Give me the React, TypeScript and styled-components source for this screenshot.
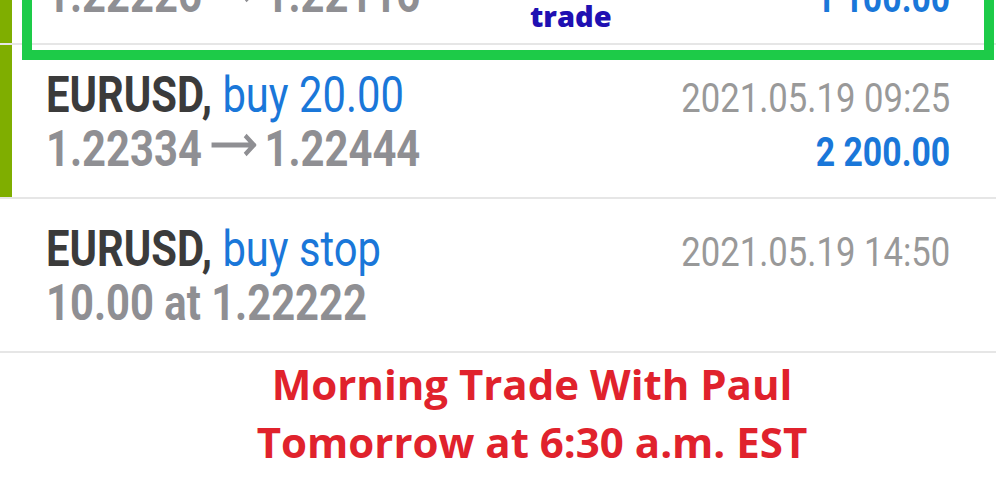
import React from 'react'
import styled, { createGlobalStyle } from 'styled-components'

const GlobalStyle = createGlobalStyle`
  html, body {
    margin: 0;
    padding: 0;
    background: #ffffff;
    overflow: hidden;
  }
`

const Page = styled.div`
  position: relative;
  width: 996px;
  height: 480px;
  overflow: hidden;
  background: #ffffff;
`

const List = styled.div`
  margin-top: -109px;
`

const Row = styled.div<{ $marked?: boolean }>`
  height: 154px;
  box-sizing: border-box;
  padding: 23px 46px 0 46px;
  border-bottom: 2px solid #e6e6e6;
  box-shadow: ${(p) => (p.$marked ? 'inset 12px 0 0 #7fae00' : 'none')};
  display: grid;
  grid-template-columns: 1fr auto;
  grid-auto-rows: 54px;
  align-items: baseline;
  font-family: Roboto, 'Liberation Sans', sans-serif;
  line-height: 54px;
  white-space: nowrap;
`

const Left = styled.div`
  font-size: 50px;
  transform: scaleX(0.835);
  transform-origin: left center;
`

const Right = styled.div<{ $bold?: boolean }>`
  justify-self: end;
  font-size: ${(p) => (p.$bold ? '40px' : '41px')};
  font-weight: ${(p) => (p.$bold ? 700 : 400)};
  color: ${(p) => (p.$bold ? '#1a77d9' : '#999999')};
  transform: scaleX(0.845);
  transform-origin: right center;
`

const Symbol = styled.span`
  font-weight: 700;
  color: #3b3b3b;
`

const Action = styled.span`
  font-weight: 400;
  color: #1a77d9;
`

const Price = styled.span`
  font-weight: 700;
  color: #8f8f93;
`

const ArrowIcon = styled.svg`
  width: 54px;
  height: 24px;
  margin: 0 10px 0 11px;
  vertical-align: 9px;
`

const Highlight = styled.div`
  position: absolute;
  left: 22px;
  top: -30px;
  width: 972px;
  height: 90px;
  box-sizing: border-box;
  border: 10px solid #1dcb48;
  pointer-events: none;
`

const Label = styled.div`
  position: absolute;
  left: 530px;
  top: 1px;
  font-family: 'Open Sans', 'Liberation Sans', sans-serif;
  font-weight: 800;
  font-size: 29px;
  line-height: 29px;
  color: #2010b2;
`

const Banner = styled.div`
  padding: 2px 0 0 68px;
  text-align: center;
  font-family: 'Open Sans', 'Liberation Sans', sans-serif;
  font-weight: 700;
  font-size: 42px;
  line-height: 58px;
  color: #e0222c;
`

type Trade = {
  symbol: string
  action: string
  open: string
  close?: string
  time: string
  profit?: string
  marked?: boolean
}

const trades: Trade[] = [
  { symbol: 'EURUSD', action: 'sell 10.00', open: '1.22226', close: '1.22116', time: '2021.05.19 08:40', profit: '1 100.00', marked: true },
  { symbol: 'EURUSD', action: 'buy 20.00', open: '1.22334', close: '1.22444', time: '2021.05.19 09:25', profit: '2 200.00', marked: true },
  { symbol: 'EURUSD', action: 'buy stop', open: '10.00 at 1.22222', time: '2021.05.19 14:50' },
]

function Arrow() {
  return (
    <ArrowIcon viewBox="0 0 54 24" aria-label="→">
      <path d="M0 12H51M40.5 2.5L51 12L40.5 21.5" fill="none" stroke="#8f8f93" strokeWidth="5" />
    </ArrowIcon>
  )
}

export default function App(): JSX.Element {
  return (
    <Page>
      <GlobalStyle />
      <List>
        {trades.map((t, i) => (
          <Row key={i} $marked={t.marked}>
            <Left>
              <Symbol>{t.symbol},</Symbol> <Action>{t.action}</Action>
            </Left>
            <Right>{t.time}</Right>
            <Left>
              <Price>
                {t.open}
                {t.close && (
                  <>
                    <Arrow />
                    {t.close}
                  </>
                )}
              </Price>
            </Left>
            <Right $bold>{t.profit ?? ''}</Right>
          </Row>
        ))}
      </List>
      <Banner>
        Morning Trade With Paul
        <br />
        Tomorrow at 6:30 a.m. EST
      </Banner>
      <Highlight />
      <Label>trade</Label>
    </Page>
  )
}
